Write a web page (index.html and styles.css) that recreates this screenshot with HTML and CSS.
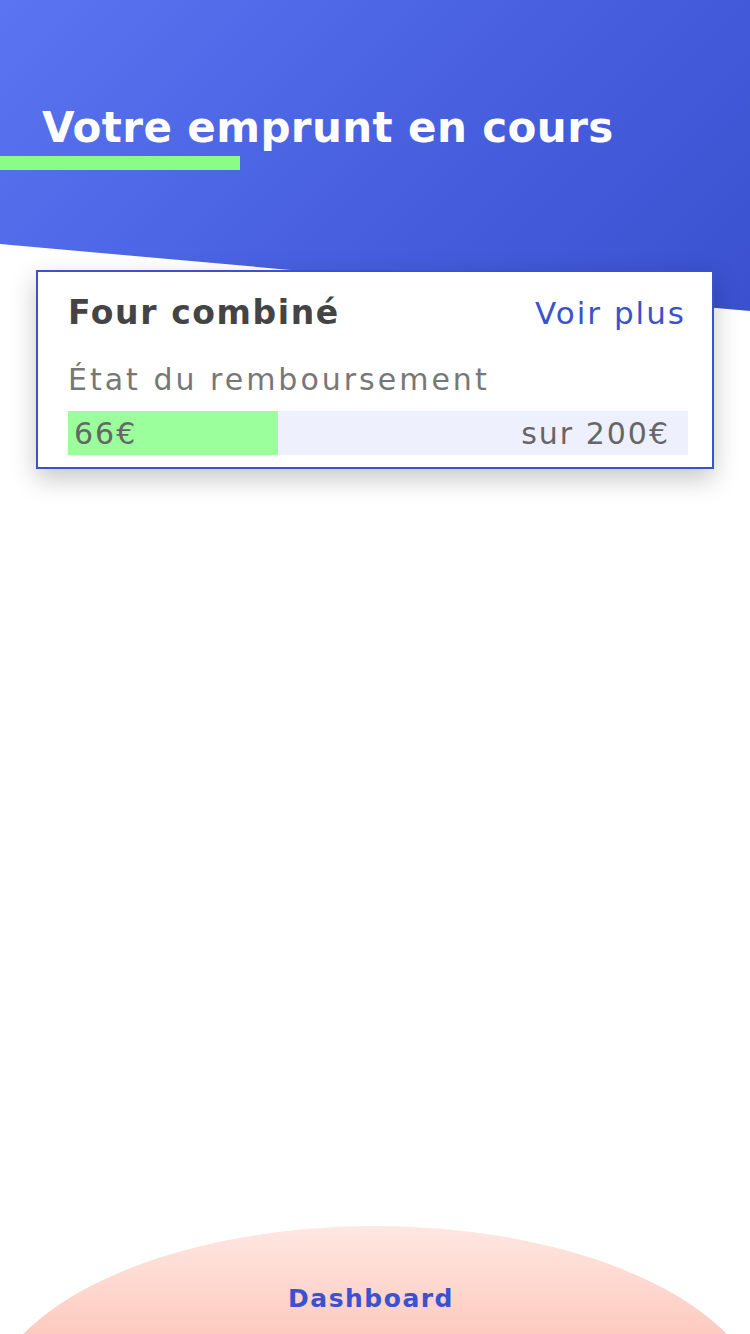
FILE: index.html
```html
<!DOCTYPE html>
<html lang="fr">
<head>
<meta charset="utf-8">
<title>Votre emprunt en cours</title>
<link rel="stylesheet" href="styles.css">
</head>
<body>
<div class="page">
  <header class="hero">
    <h1 class="hero-title">Votre emprunt en cours</h1>
    <div class="hero-underline"></div>
  </header>
  <section class="loan-card">
    <div class="loan-head">
      <h2 class="loan-name">Four combiné</h2>
      <a class="loan-more" href="#">Voir plus</a>
    </div>
    <p class="loan-label">État du remboursement</p>
    <div class="progress">
      <div class="progress-fill" style="width: 33.9%"></div>
      <span class="progress-paid">66€</span>
      <span class="progress-total">sur 200€</span>
    </div>
  </section>
</div>
<nav class="bottom-nav">
  <div class="nav-blob"></div>
  <a class="nav-link" href="#">Dashboard</a>
</nav>
</body>
</html>
```
FILE: styles.css
```css
html, body {
  margin: 0;
  padding: 0;
  background: #ffffff;
}
body {
  font-family: "DejaVu Sans", "Open Sans", sans-serif;
  width: 750px;
  height: 1334px;
  overflow: hidden;
  position: relative;
}
.page {
  display: flex;
  flex-direction: column;
}
.hero {
  height: 311px;
  background: linear-gradient(135deg, #5b74f1 0%, #4a63e2 45%, #3a50cf 100%);
  clip-path: polygon(0 0, 100% 0, 100% 100%, 0 244px);
  display: flex;
  flex-direction: column;
  padding-top: 102px;
  box-sizing: border-box;
}
.hero-title {
  margin: 0 0 0 42px;
  color: #ffffff;
  font-size: 42px;
  font-weight: 700;
  line-height: 52px;
  letter-spacing: 0.4px;
}
.hero-underline {
  width: 240px;
  height: 14px;
  background: #88fd88;
  margin-top: 2px;
}
.loan-card {
  margin: -41px 0 0 36px;
  width: 678px;
  height: 199px;
  box-sizing: border-box;
  border: 2px solid #3a52d0;
  background: #ffffff;
  box-shadow: 0 10px 24px rgba(0, 0, 0, 0.22);
  padding: 21px 26px 0 30px;
  display: flex;
  flex-direction: column;
  position: relative;
}
.loan-head {
  display: flex;
  justify-content: space-between;
  align-items: baseline;
  height: 46px;
}
.loan-name {
  margin: 0;
  font-size: 33px;
  font-weight: 700;
  color: #444444;
  letter-spacing: 1.6px;
}
.loan-more {
  font-size: 31px;
  color: #3a52d0;
  text-decoration: none;
  letter-spacing: 2px;
  font-weight: 400;
}
.loan-label {
  margin: 24px 0 0 0;
  font-size: 30px;
  line-height: 34px;
  color: #777777;
  letter-spacing: 3px;
}
.progress {
  position: relative;
  margin: 14px -2px 0 0;
  height: 44px;
  background: #eef1fd;
  display: flex;
  align-items: center;
  justify-content: space-between;
  padding: 0 18px 0 6px;
}
.progress-fill {
  position: absolute;
  left: 0;
  top: 0;
  bottom: 0;
  background: #9bff9b;
}
.progress-paid,
.progress-total {
  position: relative;
  font-size: 30px;
  color: #666666;
  letter-spacing: 2px;
}
.bottom-nav {
  position: fixed;
  left: 0;
  right: 0;
  bottom: 0;
  height: 108px;
  overflow: hidden;
  display: flex;
  justify-content: center;
}
.nav-blob {
  position: absolute;
  left: -15px;
  top: 0;
  width: 780px;
  height: 380px;
  border-radius: 50%;
  background: linear-gradient(180deg, #fee7e2 0px, #fdcbbf 108px);
}
.nav-link {
  position: relative;
  margin-top: 58px;
  margin-right: 8px;
  height: 30px;
  font-size: 25px;
  font-weight: 700;
  line-height: 30px;
  color: #3a52d0;
  text-decoration: none;
  letter-spacing: 1.5px;
}
```
